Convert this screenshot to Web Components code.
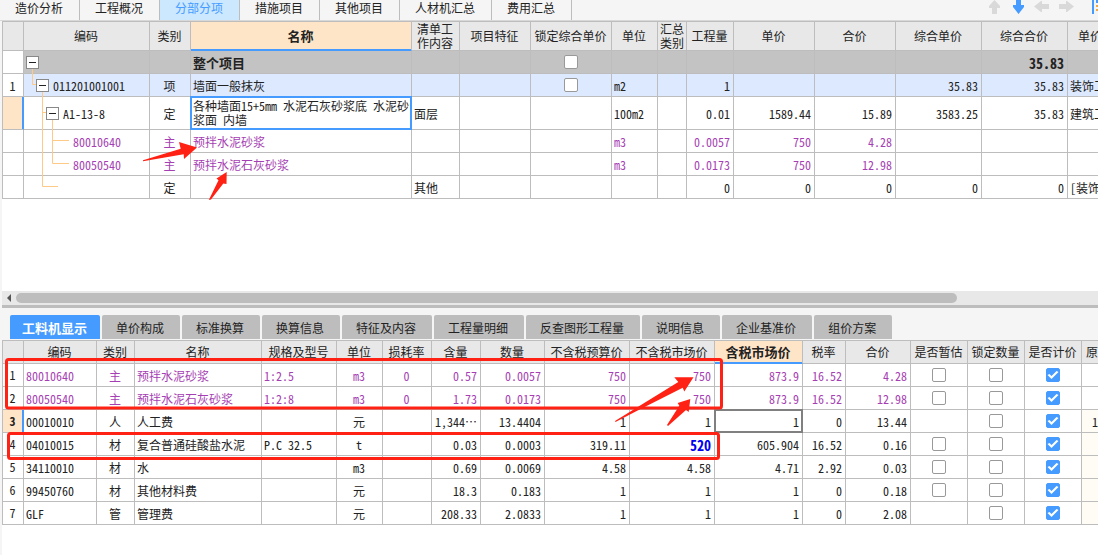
<!DOCTYPE html>
<html lang="zh-CN">
<head>
<meta charset="utf-8">
<title>分部分项</title>
<style>
  html, body { margin: 0; min-height: 100%; }
  body {
    background: #f5f5f5; color: #222; overflow-x: hidden;
    font: 12px/14px "Noto Sans CJK SC", sans-serif;
    font-feature-settings: "hwid";
  }
</style>
</head>
<body>
<cost-app></cost-app>

<template id="app-tpl">
  <style>
    :host { display: flex; flex-direction: column; min-height: 100vh; position: relative; overflow: hidden; }
    header { display: flex; justify-content: space-between; height: 20px; border-bottom: 1px solid #d8d8d8; overflow: hidden; }
    .upper, .lower { margin-left: 2px; background: #fff; overflow: hidden; }
    .upper { height: 270px; }
    .lower { flex: 1; border-top: 1px solid #bdbdbd; }
    panel-tabs { margin: 7px 0 0 10px; }
  </style>
  <header>
    <main-tabs></main-tabs>
    <move-tools></move-tools>
  </header>
  <section class="upper"><data-grid name="items"></data-grid></section>
  <h-scroll></h-scroll>
  <panel-tabs></panel-tabs>
  <section class="lower"><data-grid name="resources"></data-grid></section>
  <review-marks></review-marks>
</template>

<template id="tools-tpl">
  <style>
    :host { display: flex; gap: 8px; width: 112px; flex: none; }
    button { border: 0; padding: 0; background: none; width: 16px; height: 14px; color: #d9d9d9; flex: none; }
    button.on { color: #459bff; }
    svg { display: block; fill: currentColor; }
  </style>
  <button aria-label="上移"><svg width="16" height="14"><path d="M8.500 0 L14 6 V8 H11 V14 H6 V8 H3 V6Z"/></svg></button>
  <button class="on" aria-label="下移"><svg width="16" height="14"><path d="M6 0 H11 V5 H14 V7 L8.500 14 L3 7 V5 H6Z"/></svg></button>
  <button aria-label="左移"><svg width="16" height="14"><path d="M0 6.500 L7 1 H8 V4 H15 V9 H8 V12 H7Z"/></svg></button>
  <button aria-label="右移"><svg width="16" height="14"><path d="M16 6.500 L9 1 H8 V4 H1 V9 H8 V12 H9Z"/></svg></button>
  <button aria-label="整理"><svg width="16" height="14"><path fill="#459bff" d="M10 0h2v14h-2zM14 0h2v3h-2z"/><path fill="#f5a742" d="M14 5h2v2h-2zM14 9h2v2h-2z"/></svg></button>
</template>

<template id="scroll-tpl">
  <style>
    :host { display: flex; align-items: center; height: 14px; margin-left: 2px; background: #e8e8e8; border-bottom: 3px solid #bdbdbd; }
    button { border: 0; padding: 0; background: none; width: 14px; height: 14px; flex: none; }
    svg { display: block; }
    div { flex: 1; }
    i { display: block; height: 10px; border-radius: 5px; width: 87%; background: #bdbdbd; }
  </style>
  <button aria-label="向左滚动"><svg width="14" height="14"><path d="M5 7 L9 3 V11Z" fill="#555"/></svg></button><div><i></i></div>
</template>

<template id="marks-tpl">
  <style>
    :host { position: absolute; top: 0; left: 0; pointer-events: none; }
    svg { display: block; }
    rect { fill: none; stroke: #ff2114; stroke-width: 3; }
    path { fill: #ff2114; }
  </style>
  <svg width="724" height="470" aria-hidden="true">
    <rect x="6.5" y="359.5" width="715" height="48.5" rx="2"/>
    <rect x="8.5" y="433.5" width="710" height="25" rx="2"/>
    <path d="M143 160.3 L180.7 148.7 L179 142 L197 147.5 L184 159 L183.7 154.3 L143 161.2Z"/>
    <path d="M208.8 200 L218.5 180.3 L216.5 178.5 L226.7 172 L226.5 184 L223.3 183.5 L211 199.5Z"/>
    <path d="M615 421 L678.3 382 L674.3 377.3 L693.5 377.3 L684.3 391.5 L682.7 387.7 L636.7 411 L615.5 422Z"/>
    <path d="M667 425 L679.3 405.7 L677.7 403 L690.3 399 L688.7 411.9 L686 410 L668 426Z"/>
  </svg>
</template>

<script>
class TemplateElement extends HTMLElement {
  connectedCallback() {
    if (this.shadowRoot) return;
    const root = this.attachShadow({ mode: 'open' });
    root.append(document.getElementById(this.constructor.tpl).content.cloneNode(true));
  }
}
class CostApp extends TemplateElement { static tpl = 'app-tpl'; }
class MoveTools extends TemplateElement { static tpl = 'tools-tpl'; }
class HScroll extends TemplateElement { static tpl = 'scroll-tpl'; }
class ReviewMarks extends TemplateElement { static tpl = 'marks-tpl'; }

class MainTabs extends HTMLElement {
  connectedCallback() {
    const tabs = ['造价分析', '工程概况', '分部分项', '措施项目', '其他项目', '人材机汇总', '费用汇总'];
    this.attachShadow({ mode: 'open' }).innerHTML = `
      <style>
        :host { display: flex; }
        button { font: inherit; color: inherit; border: 0; border-right: 1px solid #bdbdbd; background: none;
          padding: 0 16px 5px 15px; height: 20px; white-space: nowrap; }
        .on { background: #cce8ff; color: #459bff; }
      </style>` + tabs.map((t, i) => `<button class="${i === 2 ? 'on' : ''}">${t}</button>`).join('');
  }
}

class PanelTabs extends HTMLElement {
  connectedCallback() {
    const tabs = ['工料机显示', '单价构成', '标准换算', '换算信息', '特征及内容', '工程量明细', '反查图形工程量', '说明信息', '企业基准价', '组价方案'];
    this.attachShadow({ mode: 'open' }).innerHTML = `
      <style>
        :host { display: flex; gap: 2px; height: 25px; }
        button { font: inherit; color: inherit; border: 0; background: #bdbdbd; padding: 2px 16px 0 14px;
          height: 24px; border-radius: 2px 2px 0 0; white-space: nowrap; }
        .on { background: #459bff; color: #fff; font-weight: bold; font-size: 13px; width: 90px; padding: 2px 1px 0 0; }
      </style>` + tabs.map((t, i) => `<button class="${i ? '' : 'on'}">${t}</button>`).join('');
  }
}

/* Cell markers: "[]" empty tick box, "[x]" ticked box. */
const GRIDS = {
  items: {
    widths: [21, 126, 41, 221, 48, 71, 81, 46, 29, 47, 81, 81, 86, 86, 81],
    heads: ['', '编码', '类别', '名称', '清单工作内容', '项目特征', '锁定综合单价', '单位', '汇总类别', '工程量', '单价', '合价', '综合单价', '综合合价', '单价'],
    align: 'cTclllclcrrrrrl',
    activeHead: 3,
    headHeight: 29,
    rows: [
      { cls: 'total', box: 1, cells: ['', '', '', '整个项目', '', '', '[]', '', '', '', '', '', '', '35.83', ''] },
      { cls: 'picked', box: 2, cells: ['1', '011201001001', '项', '墙面一般抹灰', '', '', '[]', 'm2', '', '1', '', '', '35.83', '35.83', '装饰工'] },
      { cls: 'tall', box: 3, mark: true, edit: 3, cells: ['', 'A1-13-8', '定', '各种墙面15+5mm 水泥石灰砂浆底 水泥砂浆面 内墙', '面层', '', '', '100m2', '', '0.01', '1589.44', '15.89', '3583.25', '35.83', '建筑工'] },
      { cls: 'main child', cells: ['', '80010640', '主', '预拌水泥砂浆', '', '', '', 'm3', '', '0.0057', '750', '4.28', '', '', ''] },
      { cls: 'main child', cells: ['', '80050540', '主', '预拌水泥石灰砂浆', '', '', '', 'm3', '', '0.0173', '750', '12.98', '', '', ''] },
      { cls: '', cells: ['', '', '定', '', '其他', '', '', '', '', '0', '0', '0', '0', '0', '[装饰'] }
    ]
  },
  resources: {
    widths: [21, 73, 38, 127, 75, 46, 49, 49, 64, 85, 85, 88, 43, 65, 57, 57, 57, 60],
    heads: ['', '编码', '类别', '名称', '规格及型号', '单位', '损耗率', '含量', '数量', '不含税预算价', '不含税市场价', '含税市场价', '税率', '合价', '是否暂估', '锁定数量', '是否计价', '原'],
    align: 'nlcllccrrrrrrrcccf',
    activeHead: 11,
    headHeight: 23,
    rows: [
      { cls: 'main', cells: ['1', '80010640', '主', '预拌水泥砂浆', '1:2.5', 'm3', '0', '0.57', '0.0057', '750', '750', '873.9', '16.52', '4.28', '[]', '[]', '[x]', ''] },
      { cls: 'main', cells: ['2', '80050540', '主', '预拌水泥石灰砂浆', '1:2:8', 'm3', '0', '1.73', '0.0173', '750', '750', '873.9', '16.52', '12.98', '[]', '[]', '[x]', ''] },
      { cls: 'tint', mark: true, focus: 11, cells: ['3', '00010010', '人', '人工费', '', '元', '', '1,344…', '13.4404', '1', '1', '1', '0', '13.44', '', '[]', '[x]', '1'] },
      { cls: 'tint changed', cells: ['4', '04010015', '材', '复合普通硅酸盐水泥', 'P.C 32.5', 't', '', '0.03', '0.0003', '319.11', '520', '605.904', '16.52', '0.16', '[]', '[]', '[x]', ''] },
      { cls: 'tint', cells: ['5', '34110010', '材', '水', '', 'm3', '', '0.69', '0.0069', '4.58', '4.58', '4.71', '2.92', '0.03', '[]', '[]', '[x]', ''] },
      { cls: 'tint', cells: ['6', '99450760', '材', '其他材料费', '', '元', '', '18.3', '0.183', '1', '1', '1', '0', '0.18', '[]', '[]', '[x]', ''] },
      { cls: 'tint', cells: ['7', 'GLF', '管', '管理费', '', '元', '', '208.33', '2.0833', '1', '1', '1', '0', '2.08', '', '[]', '[x]', ''] }
    ]
  }
};

class DataGrid extends HTMLElement {
  connectedCallback() {
    const name = this.getAttribute('name'), g = GRIDS[name];
    const total = g.widths.reduce((a, b) => a + b, 1);
    const cell = (r, c, i) => {
      const cls = ['a-' + g.align[i]];
      if (r.mark && i === 0) cls.push('current');
      if (r.edit === i) cls.push('edit');
      if (r.focus === i) cls.push('focus');
      let body = c;
      if (c === '[]' || c === '[x]')
        body = `<input type="checkbox" aria-label="${g.heads[i]}"${c === '[x]' ? ' checked' : ''}>`;
      if (r.box && i === 1)
        body = `<div class="node d${r.box}"><button aria-label="折叠"></button><span>${c}</span></div>`;
      return `<td class="${cls.join(' ')}">${body}</td>`;
    };
    const tree = name === 'items' ? `
      <svg width="70" height="176" aria-hidden="true"><path d="M30.5 47V63.5H34M40.5 70V165.5H56M40.5 91.5H44M50.5 98V142.5H67M50.5 119.5H67"/></svg>` : '';
    this.attachShadow({ mode: 'open' }).innerHTML = `
      <style>
        :host { display: block; position: relative; }
        table { table-layout: fixed; border-collapse: separate; border-spacing: 0; width: ${total}px;
          border-left: 1px solid #bdbdbd; }
        :host([name=items]) table { border-top: 1px solid #bdbdbd; }
        th, td { box-sizing: border-box; border: 0 solid #bdbdbd; border-width: 0 1px 1px 0; }
        th { background: #e8e8e8; font-weight: normal; height: ${g.headHeight}px; padding: 0 5px 0 4px; line-height: 14px; }
        th.narrow { padding: 0 2px; }
        th.one { white-space: nowrap; padding: 0 1px 0 0; }
        th.active { background: #ffe5c7; font-weight: bold; font-size: 13px; border-bottom-color: #459bff; box-shadow: inset 0 -1px #459bff; }
        th:last-child { text-align: left; padding-left: 10px; }
        :host([name=resources]) th:last-child { padding-left: 4px; }
        td { height: 23px; padding: 2px 2px 0; background: #fff; white-space: nowrap; text-align: left; overflow: hidden; }
        .a-c, .a-n { text-align: center; padding: 2px 1px 0 0; }
        .a-n { padding: 0 1px 1px 0; }
        .a-r { text-align: right; padding-right: 3px; }
        .a-f { padding-left: 10px; }
        .total td { background: #c3c3c3; font-weight: bold; font-size: 13px; }
        .total .a-r { font-size: 14px; }
        .picked td { background: #dde9ff; }
        .total td:first-child, .picked td:first-child { background: #fff; }
        .tall td { height: 33px; }
        .main td { color: #a63fb3; }
        .main .a-n { color: #222; }
        .tint .a-f { background: #fffbf5; }
        .changed td:nth-child(11) { color: #0000f0; font-weight: bold; font-size: 14px; }
        .child .a-T { padding-left: 49px; }
        td.current { background: #ffe5c7; border-right-color: #459bff; box-shadow: inset -1px 0 #459bff; font-weight: bold; }
        td.edit, td.focus { position: relative; overflow: visible; }
        td.edit { white-space: normal; padding: 0 0 0 2px; }
        td.edit::after, td.focus::after { content: ""; position: absolute; inset: -1px; border: 2px solid #459bff; }
        td.focus::after { border-color: #808080; }
        .a-T { padding: 0 2px; }
        .child .a-T { padding-top: 2px; }
        .node { display: flex; gap: 4px; align-items: center; position: relative; z-index: 1; }
        .d2 { padding-left: 10px; } .d3 { padding-left: 20px; }
        .node span { padding-top: 2px; }
        .node button { box-sizing: border-box; width: 13px; height: 13px; padding: 0 2px; border: 1px solid #888;
          background: #fff; display: flex; align-items: center; flex: none; }
        .node button::before { content: ""; flex: 1; height: 1px; background: #222; }
        input { appearance: none; box-sizing: border-box; display: block; margin: -2px auto 0; width: 14px; height: 14px;
          border: 1px solid #999; border-radius: 2px; background: #fff; }
        input:checked { border-color: #459bff; background: #459bff; }
        input:checked::before { content: ""; display: block; width: 12px; height: 12px; background: #fff;
          clip-path: polygon(1px 6px, 3px 5px, 5px 7px, 10px 2px, 12px 3px, 5px 10px); }
        svg { position: absolute; top: 0; left: 0; fill: none; stroke: #ffc987; pointer-events: none; }
      </style>
      <table>
        <colgroup>${g.widths.map(w => `<col style="width:${w}px">`).join('')}</colgroup>
        <thead><tr>${g.heads.map((h, i) => `<th class="${i === g.activeHead ? 'active ' : ''}${h === '汇总类别' ? 'narrow' : h === '清单工作内容' ? '' : 'one'}">${h}</th>`).join('')}</tr></thead>
        <tbody>${g.rows.map(r => `<tr class="${r.cls}">${r.cells.map((c, i) => cell(r, c, i)).join('')}</tr>`).join('')}</tbody>
      </table>${tree}`;
  }
}

customElements.define('main-tabs', MainTabs);
customElements.define('panel-tabs', PanelTabs);
customElements.define('move-tools', MoveTools);
customElements.define('h-scroll', HScroll);
customElements.define('review-marks', ReviewMarks);
customElements.define('data-grid', DataGrid);
customElements.define('cost-app', CostApp);
</script>
</body>
</html>
